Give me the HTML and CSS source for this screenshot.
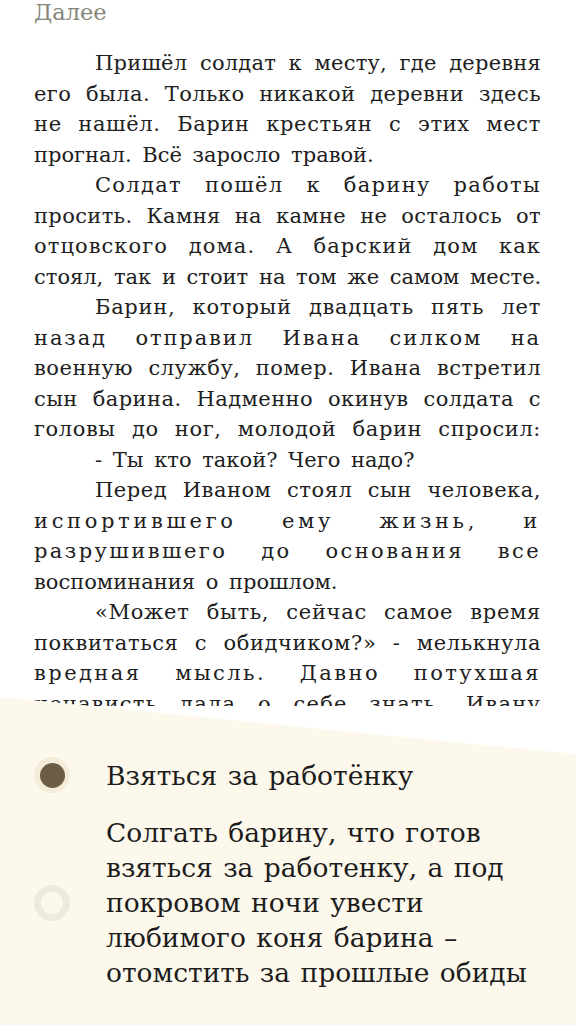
FILE: index.html
```html
<!DOCTYPE html>
<html lang="ru">
<head>
<meta charset="utf-8">
<title>Далее</title>
<link rel="stylesheet" href="styles.css">
</head>
<body>
<main class="reader">
  <h2 class="chapter-title">Далее</h2>
  <div class="story">
    <p class="para">
      <span class="ln first">Пришёл солдат к месту, где деревня</span>
      <span class="ln">его была. Только никакой деревни здесь</span>
      <span class="ln">не нашёл. Барин крестьян с этих мест</span>
      <span class="ln end">прогнал. Всё заросло травой.</span>
    </p>
    <p class="para">
      <span class="ln first">Солдат пошёл к барину работы</span>
      <span class="ln">просить. Камня на камне не осталось от</span>
      <span class="ln">отцовского дома. А барский дом как</span>
      <span class="ln">стоял, так и стоит на том же самом месте.</span>
    </p>
    <p class="para">
      <span class="ln first">Барин, который двадцать пять лет</span>
      <span class="ln">назад отправил Ивана силком на</span>
      <span class="ln">военную службу, помер. Ивана встретил</span>
      <span class="ln">сын барина. Надменно окинув солдата с</span>
      <span class="ln">головы до ног, молодой барин спросил:</span>
    </p>
    <p class="para">
      <span class="ln first end">- Ты кто такой? Чего надо?</span>
    </p>
    <p class="para">
      <span class="ln first">Перед Иваном стоял сын человека,</span>
      <span class="ln">испортившего ему жизнь, и</span>
      <span class="ln">разрушившего до основания все</span>
      <span class="ln end">воспоминания о прошлом.</span>
    </p>
    <p class="para">
      <span class="ln first">«Может быть, сейчас самое время</span>
      <span class="ln">поквитаться с обидчиком?» - мелькнула</span>
      <span class="ln">вредная мысль. Давно потухшая</span>
      <span class="ln">ненависть дала о себе знать. Ивану</span>
      <span class="ln end">захотелось отомстить.</span>
    </p>
  </div>
</main>

<section class="choices">
  <div class="choice">
    <span class="radio selected"></span>
    <span class="choice-text">Взяться за работёнку</span>
  </div>
  <div class="choice">
    <span class="radio"></span>
    <span class="choice-text">Солгать барину, что готов<br>взяться за работенку, а под<br>покровом ночи увести<br>любимого коня барина –<br>отомстить за прошлые обиды</span>
  </div>
</section>
<script src="script.js"></script>
</body>
</html>
```

FILE: styles.css
```css
html, body {
  margin: 0;
  padding: 0;
}

body {
  width: 576px;
  height: 1025px;
  overflow: hidden;
  position: relative;
  background: #ffffff;
  font-family: "DejaVu Serif", "Liberation Serif", serif;
  color: #202020;
}

.reader {
  height: 706px;
  overflow: hidden;
  padding: 0 35px 0 34px;
  box-sizing: border-box;
}

.chapter-title {
  margin: 0;
  font-weight: normal;
  font-size: 22.5px;
  line-height: 24px;
  color: #86877a;
}

.story {
  margin-top: 24px;
  font-size: 21px;
  line-height: 30.5px;
  word-spacing: 4px;
}

.para {
  margin: 0;
}

.ln {
  display: block;
  white-space: nowrap;
  text-align: justify;
  text-align-last: justify;
}

.ln.first {
  text-indent: 61px;
}

.ln.end,
.story.measuring .ln {
  text-align-last: left;
}

.choices {
  position: absolute;
  left: 0;
  right: 0;
  top: 690px;
  bottom: 0;
  background: #fdf8ec;
  clip-path: polygon(0 7px, 100% 64px, 100% 100%, 0 100%);
  padding: 67px 34px 0 34px;
  box-sizing: border-box;
  display: flex;
  flex-direction: column;
  gap: 22px;
}

.choice {
  display: flex;
  align-items: center;
  gap: 36px;
}

.radio {
  flex: none;
  width: 36px;
  height: 36px;
  border-radius: 50%;
  box-sizing: border-box;
  border: 7px solid #efeadf;
}

.radio.selected {
  border: none;
  background: #f4ecd9;
  display: flex;
  align-items: center;
  justify-content: center;
}

.radio.selected::after {
  content: "";
  width: 25px;
  height: 25px;
  border-radius: 50%;
  background: #6b5d46;
}

.choice-text {
  font-size: 26.5px;
  line-height: 35px;
  word-spacing: 2px;
  color: #1c1c1c;
  white-space: nowrap;
}
```

FILE: script.js
```js
(function () {
  var WORD_WEIGHT = 8;
  var BASE_WS = 4;

  function justifyLines() {
    var story = document.querySelector('.story');
    if (!story) return;
    story.classList.add('measuring');
    var lines = Array.prototype.slice.call(story.querySelectorAll('.ln:not(.end)'));
    var data = lines.map(function (ln) {
      var text = ln.textContent.replace(/\s+/g, ' ').trim();
      ln.textContent = text;
      var indent = parseFloat(getComputedStyle(ln).textIndent) || 0;
      var avail = ln.clientWidth - indent;
      var range = document.createRange();
      range.selectNodeContents(ln);
      var w = range.getBoundingClientRect().width;
      var spaces = (text.match(/ /g) || []).length;
      return { ln: ln, text: text, avail: avail, w: w, spaces: spaces };
    });
    data.forEach(function (d) {
      var extra = Math.max(0, d.avail - d.w);
      var n = d.text.length;
      var ls = extra / (n + WORD_WEIGHT * d.spaces) * 0.97;
      d.ln.style.letterSpacing = ls.toFixed(2) + 'px';
      d.ln.style.wordSpacing = (BASE_WS + (WORD_WEIGHT - 1) * ls).toFixed(2) + 'px';
    });
    story.classList.remove('measuring');
  }

  justifyLines();
})();
```
